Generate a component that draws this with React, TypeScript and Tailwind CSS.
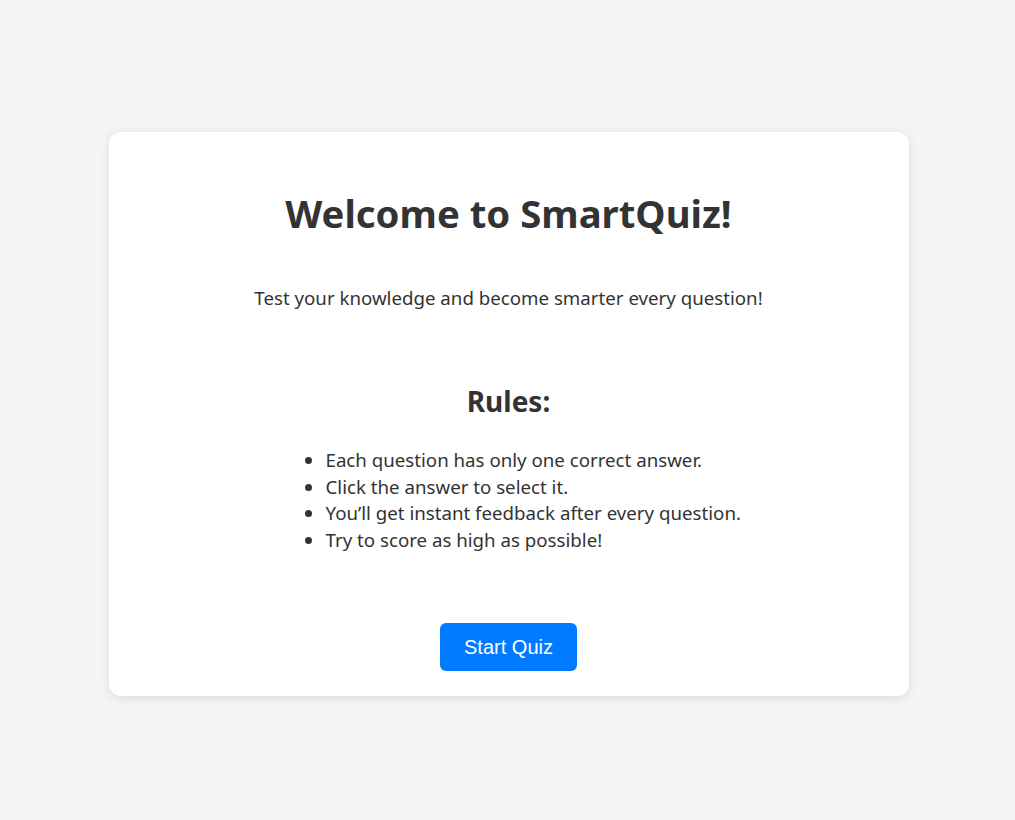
import React from 'react';

const rules = [
  'Each question has only one correct answer.',
  'Click the answer to select it.',
  'You\u2019ll get instant feedback after every question.',
  'Try to score as high as possible!',
];

const App: React.FC = () => {
  return (
    <div className="min-h-screen bg-[#f4f4f4] pt-[132px] pl-[2px] font-['Noto_Sans',sans-serif] text-[#333]">
      <div className="mx-auto flex w-[800px] flex-col items-center rounded-xl bg-white px-10 pt-[57px] pb-[25px] shadow-[0_2px_10px_rgba(0,0,0,0.1)]">
        <h1 className="text-[38.3px] leading-[48px] font-bold">Welcome to SmartQuiz!</h1>
        <p className="mt-[47px] text-[18.7px] leading-[27px]">
          Test your knowledge and become smarter every question!
        </p>
        <h2 className="mt-[73px] text-[28px] leading-[34px] font-bold">Rules:</h2>
        <ul className="mt-[29px] ml-[136px] list-disc self-start pl-[40px] text-[18.7px] leading-[26.7px]">
          {rules.map((rule) => (
            <li key={rule} className="pl-[1px]">{rule}</li>
          ))}
        </ul>
        <button className="mt-[69px] rounded-md bg-[#007bff] px-[24.5px] py-3 font-['Liberation_Sans',Arial,sans-serif] text-[20px] leading-6 text-white">
          Start Quiz
        </button>
      </div>
    </div>
  );
};

export default App;
